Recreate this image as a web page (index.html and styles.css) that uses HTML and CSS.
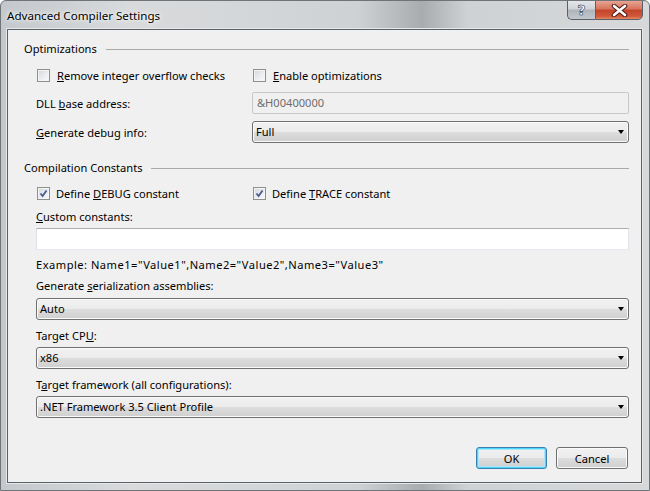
FILE: index.html
```html
<!DOCTYPE html>
<html lang="en">
<head>
    <meta charset="UTF-8">
    <title>Advanced Compiler Settings</title>
    <link rel="stylesheet" href="styles.css">
</head>
<body>

    <div class="window">
        <div class="titlebar">
            <span class="title">Advanced Compiler Settings</span>
            <div class="caption-buttons">
                <div class="cap-btn help">?</div>
                <div class="cap-btn close">
                    <svg width="17" height="13" viewBox="0 0 17 13">
                        <path d="M3 2 L14 11 M14 2 L3 11" stroke="#4a1a12" stroke-width="4.6" stroke-linecap="round"/>
                        <path d="M3 2 L14 11 M14 2 L3 11" stroke="#fff" stroke-width="2.6" stroke-linecap="round"/>
                    </svg>
                </div>
            </div>
        </div>

        <div class="client">
            <!-- Optimizations group -->
            <div class="group-header">Optimizations</div>
            <div class="row check-row first">
                <label class="check"><span class="box"></span><span><u>R</u>emove integer overflow checks</span></label>
                <label class="check"><span class="box"></span><span><u>E</u>nable optimizations</span></label>
            </div>
            <div class="row field-row">
                <span>DLL <u>b</u>ase address:</span>
                <div class="textbox disabled">&amp;H00400000</div>
            </div>
            <div class="row field-row tight">
                <span><u>G</u>enerate debug info:</span>
                <div class="combo">Full</div>
            </div>

            <!-- Compilation constants group -->
            <div class="group-header second">Compilation Constants</div>
            <div class="row check-row">
                <label class="check"><span class="box checked"></span><span>Define <u>D</u>EBUG constant</span></label>
                <label class="check"><span class="box checked"></span><span>Define <u>T</u>RACE constant</span></label>
            </div>
            <div class="label"><u>C</u>ustom constants:</div>
            <div class="textbox wide"></div>
            <div class="label example">Example: Name1="Value1",Name2="Value2",Name3="Value3"</div>

            <div class="label short">Generate <u>s</u>erialization assemblies:</div>
            <div class="combo wide">Auto</div>
            <div class="label">Target CP<u>U</u>:</div>
            <div class="combo wide">x86</div>
            <div class="label">T<u>a</u>rget framework (all configurations):</div>
            <div class="combo wide">.NET Framework 3.5 Client Profile</div>

            <div class="buttons">
                <button class="btn default">OK</button>
                <button class="btn">Cancel</button>
            </div>
        </div>
    </div>

</body>
</html>
```

FILE: styles.css
```css
body {
    margin: 0;
    font-family: "Noto Sans", "Open Sans", sans-serif;
    font-size: 11.1px;
    color: #000;
    background: #fff;
}
.window {
    width: 650px;
    height: 491px;
    box-sizing: border-box;
    border: 1px solid #6f7478;
    border-radius: 6px 6px 0 0;
    background: linear-gradient(to right, #c4c8cc 0%, #d8dadc 20%, #cfd2d4 55%, #a9acaf 65%, #cfd2d4 72%, #d6d8da 100%);
    display: flex;
    flex-direction: column;
    overflow: hidden;
}
/* Title bar */
.titlebar {
    height: 28px;
    display: flex;
    justify-content: space-between;
    align-items: flex-start;
    flex-shrink: 0;
}
.title {
    margin: 8px 0 0 6px;
    font-size: 11.6px;
    line-height: 14px;
    color: #000;
    text-shadow: 0 0 6px #fff, 0 0 3px #fff;
}
.caption-buttons {
    display: flex;
    margin-right: 6px;
    margin-top: -1px;
}
.cap-btn {
    height: 20px;
    box-sizing: border-box;
    border: 1px solid #59606a;
    display: flex;
    align-items: center;
    justify-content: center;
}
.cap-btn.help {
    width: 28px;
    border-radius: 0 0 0 5px;
    border-right: none;
    background: linear-gradient(to bottom, #e4e6e9 0%, #cfd3d8 45%, #aeb3ba 50%, #c4c9cf 100%);
    color: #fff;
    font-family: "DejaVu Sans", sans-serif;
    font-weight: bold;
    font-size: 14px;
    line-height: 18px;
    -webkit-text-stroke: 0.6px #2f343a;
}
.cap-btn.close {
    width: 48px;
    border-radius: 0 0 5px 0;
    background: linear-gradient(to bottom, #e8a493 0%, #d7735c 45%, #c34428 50%, #d2583b 85%, #e48a64 100%);
}
/* Client area */
.client {
    flex: 1;
    margin: 0 7px 7px 6px;
    border: 1px solid #5b6168;
    box-shadow: 0 0 0 1px #e6e8ea;
    background: #f0f0f0;
    padding: 11px 12px 0 16px;
    display: flex;
    flex-direction: column;
}
.group-header {
    display: flex;
    align-items: center;
    height: 16px;
    line-height: 16px;
}
.group-header::after {
    content: "";
    flex: 1;
    height: 1px;
    background: #a9a9a9;
    margin-left: 9px;
}
.group-header.second {
    margin-top: 17px;
}
.row {
    margin-left: 12px;
    display: grid;
    grid-template-columns: 216px 1fr;
    align-items: center;
}
.check-row {
    height: 16px;
    margin-top: 9px;
}
.check-row.first {
    margin-top: 10px;
}
.field-row {
    margin-top: 9px;
}
.field-row.tight {
    margin-top: 7px;
}
.check {
    display: flex;
    align-items: center;
}
.check .box {
    width: 13px;
    height: 13px;
    box-sizing: border-box;
    border: 1px solid #8e8f8f;
    background: linear-gradient(135deg, #d4d6da 0%, #eceef0 60%, #f8f8f8 100%);
    box-shadow: inset 0 0 0 1px #f4f4f4;
    margin-right: 7px;
    margin-left: 1px;
    flex-shrink: 0;
}
.check .box.checked {
    background-color: #f4f4f4;
    background-image: url("data:image/svg+xml,%3Csvg xmlns='http://www.w3.org/2000/svg' width='11' height='11'%3E%3Cpath d='M2.5 5.5 L4.6 8 L8.6 2.5' fill='none' stroke='%234a5f97' stroke-width='1.9'/%3E%3C/svg%3E"), linear-gradient(135deg, #d4d6da 0%, #eceef0 60%, #f8f8f8 100%);
    background-repeat: no-repeat;
    background-position: 0 0;
    margin-right: 6px;
}
.label {
    margin: 8px 0 0 12px;
    height: 16px;
    line-height: 16px;
}
.label.example {
    margin-top: 7px;
    letter-spacing: 0.5px;
}
.label.short {
    margin-top: 5px;
}
.textbox {
    height: 22px;
    box-sizing: border-box;
    border: 1px solid;
    border-color: #abadb3 #e2e3ea #e3e9ef #dbdfe6;
    background: #fff;
    padding-left: 4px;
    line-height: 20px;
}
.textbox.disabled {
    border-color: #c8c8c8;
    background: #f0f0f0;
    color: #6d6d6d;
    border-radius: 2px;
}
.textbox.wide {
    margin: 3px 0 0 12px;
}
.combo {
    position: relative;
    height: 22px;
    box-sizing: border-box;
    border: 1px solid #707070;
    border-radius: 3px;
    background: linear-gradient(to bottom, #f2f2f2 0%, #ebebeb 50%, #dddddd 51%, #cfcfcf 100%);
    box-shadow: inset 0 0 0 1px #fbfbfb;
    padding-left: 3px;
    line-height: 20px;
}
.combo::after {
    content: "";
    position: absolute;
    right: 4px;
    top: 8px;
    border-left: 3.5px solid transparent;
    border-right: 3.5px solid transparent;
    border-top: 4px solid #000;
}
.combo.wide {
    margin: 3px 0 0 12px;
}
.label.short + .combo.wide {
    margin-top: 4px;
}
.buttons {
    display: flex;
    justify-content: flex-end;
    gap: 9px;
    margin-top: 29px;
    margin-right: 1px;
}
.btn {
    width: 72px;
    height: 22px;
    box-sizing: border-box;
    border: 1px solid #707070;
    border-radius: 3px;
    background: linear-gradient(to bottom, #f2f2f2 0%, #ebebeb 50%, #dddddd 51%, #cfcfcf 100%);
    box-shadow: inset 0 0 0 1px #fbfbfb;
    font-family: inherit;
    font-size: 11.1px;
    color: #000;
    padding: 0;
}
.btn.default {
    width: 71px;
    border-color: #3c7fb1;
    box-shadow: inset 0 0 0 1px #48d8fb, inset 0 0 0 2px #aee6f8;
}
```
